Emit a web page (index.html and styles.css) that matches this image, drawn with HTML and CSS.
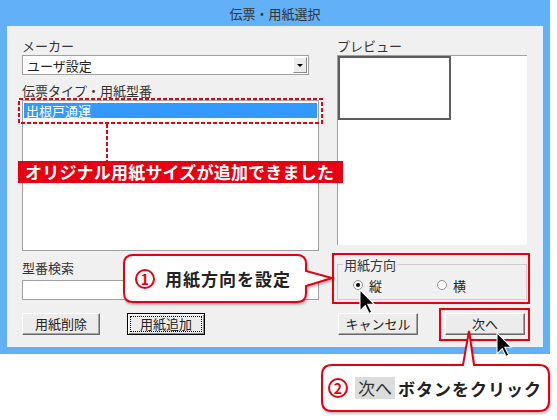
FILE: index.html
```html
<!DOCTYPE html>
<html lang="ja">
<head>
    <meta charset="UTF-8">
    <meta name="viewport" content="width=device-width, initial-scale=1.0">
    <title>伝票・用紙選択</title>
    <link rel="stylesheet" href="styles.css">
</head>
<body>
    <div class="window">
        <div class="titlebar">伝票・用紙選択</div>
        <div class="dialog">
            <div class="col-left">
                <div class="label">メーカー</div>
                <div class="combo">
                    <span class="combo-text">ユーザ設定</span>
                    <span class="combo-btn"><span class="arrow"></span></span>
                </div>
                <div class="label gap-8">伝票タイプ・用紙型番</div>
                <div class="listbox">
                    <div class="list-item selected">出根戸通運</div>
                </div>
                <div class="label gap-9">型番検索</div>
                <div class="textbox"></div>
                <div class="button-row">
                    <button type="button" class="btn">用紙削除</button>
                    <button type="button" class="btn focused">用紙追加</button>
                </div>
            </div>
            <div class="col-right">
                <div class="label">プレビュー</div>
                <div class="preview"><div class="paper"></div></div>
                <fieldset class="group">
                    <legend>用紙方向</legend>
                    <div class="radio-row">
                        <span class="radio-item first"><span class="radio checked"></span>縦</span>
                        <span class="radio-item"><span class="radio"></span>横</span>
                    </div>
                </fieldset>
                <div class="button-row right">
                    <button type="button" class="btn">キャンセル</button>
                    <button type="button" class="btn">次へ</button>
                </div>
            </div>
        </div>
    </div>

    <!-- 注釈（赤枠・吹き出し・カーソル） -->
    <svg class="marks" width="557" height="420" viewBox="0 0 557 420">
        <rect x="19" y="99" width="303" height="24" fill="none" stroke="#fff" stroke-width="2"/>
        <rect x="19" y="99" width="303" height="24" fill="none" stroke="#e60012" stroke-width="2" stroke-dasharray="4 2"/>
        <line x1="107" y1="124" x2="107" y2="161" stroke="#e60012" stroke-width="2" stroke-dasharray="4 2"/>
        <rect x="333" y="254" width="196" height="49" fill="none" stroke="#e60012" stroke-width="2"/>
        <rect x="440" y="309" width="89" height="31" fill="none" stroke="#e60012" stroke-width="2"/>
        <g class="bubble">
            <path d="M133,255 H297 Q306,255 306,264 V271 L332,278 L306,286 V293 Q306,302 297,302 H133 Q124,302 124,293 V264 Q124,255 133,255 Z" fill="#fff" stroke="#e60012" stroke-width="2"/>
            <path d="M332,365 H463 L469,331 L474,365 H539 Q549,365 549,375 V401 Q549,411 539,411 H332 Q322,411 322,401 V375 Q322,365 332,365 Z" fill="#fff" stroke="#e60012" stroke-width="2"/>
        </g>
        <path d="M0,0 V16 L4,12 L7,18 L9,17 L6,11 H11 Z" transform="translate(360 290) scale(1.3)" fill="#000" stroke="#fff" stroke-width="0.8"/>
        <path d="M0,0 V16 L4,12 L7,18 L9,17 L6,11 H11 Z" transform="translate(497 333) scale(1.3)" fill="#000" stroke="#fff" stroke-width="0.8"/>
    </svg>

    <div class="notice">オリジナル用紙サイズが追加できました</div>
    <div class="callout callout-1"><span class="num">1</span>用紙方向を設定</div>
    <div class="callout callout-2"><span class="num">2</span><span class="key">次へ</span>ボタンをクリック</div>
</body>
</html>
```

FILE: styles.css
```css
/* Reset */
* {
    margin: 0;
    padding: 0;
    box-sizing: border-box;
}
body {
    font-family: "Noto Sans CJK JP", "Noto Sans", sans-serif;
    background-color: #ffffff;
    color: #000;
    width: 557px;
    height: 420px;
    overflow: hidden;
}

/* ウィンドウ枠 */
.window {
    width: 550px;
    height: 354px;
    background-color: #62b0f8;
    padding: 0 7px 7px 7px;
}
.titlebar {
    height: 26px;
    display: flex;
    align-items: center;
    justify-content: center;
    font-size: 13px;
    color: #333;
}
.dialog {
    height: 321px;
    background-color: #f0f0f0;
    padding: 12px 16px 0 15px;
    display: flex;
    gap: 18px;
}
.col-left {
    width: 297px;
    display: flex;
    flex-direction: column;
}
.col-right {
    width: 190px;
    display: flex;
    flex-direction: column;
}
.label {
    font-size: 13px;
    line-height: 15px;
    height: 15px;
    color: #333;
    white-space: nowrap;
}
.gap-8 { margin-top: 8px; }
.gap-9 { margin-top: 9px; }

/* コンボボックス */
.combo {
    width: 287px;
    height: 20px;
    margin-top: 2px;
    background-color: #fff;
    border: 1px solid #a0a0a0;
    display: flex;
    align-items: center;
    justify-content: space-between;
    padding: 1px;
}
.combo-text {
    font-size: 13px;
    line-height: 15px;
    padding-left: 3px;
    color: #222;
}
.combo-btn {
    width: 14px;
    height: 16px;
    background-color: #ececec;
    border: 1px solid;
    border-color: #fff #8a8a8a #8a8a8a #fff;
    display: flex;
    align-items: center;
    justify-content: center;
}
.arrow {
    width: 0;
    height: 0;
    border-left: 3px solid transparent;
    border-right: 3px solid transparent;
    border-top: 3px solid #000;
}

/* リストボックス */
.listbox {
    height: 151px;
    margin-top: 2px;
    background-color: #fff;
    border: 1px solid #a0a0a0;
    padding: 2px 1px;
}
.list-item {
    height: 15px;
    font-size: 13px;
    line-height: 15px;
    padding-left: 2px;
}
.list-item.selected {
    background-color: #3399ff;
    color: #fff;
}
.textbox {
    height: 20px;
    margin-top: 5px;
    background-color: #fff;
    border: 1px solid #a0a0a0;
}

/* ボタン */
.button-row {
    display: flex;
    gap: 27px;
    margin-top: 13px;
}
.button-row.right {
    padding-left: 1px;
}
.btn {
    width: 78px;
    height: 22px;
    font-family: inherit;
    font-size: 13px;
    line-height: 18px;
    color: #222;
    background-color: #ececec;
    border: 1px solid;
    border-color: #fff #6a6a6a #6a6a6a #fff;
    box-shadow: inset -1px -1px #a0a0a0;
}
.btn.focused {
    border-color: #000;
    box-shadow: inset 1px 1px #fff, inset -1px -1px #8a8a8a;
    outline: 1px dotted #000;
    outline-offset: -4px;
}
.button-row.right .btn {
    width: 80px;
}

/* プレビュー */
.preview {
    height: 190px;
    margin-top: 2px;
    background-color: #fff;
    border-top: 1px solid #a0a0a0;
    border-left: 1px solid #a0a0a0;
}
.paper {
    width: 113px;
    height: 64px;
    border: 2px solid #5e5e5e;
}

/* 用紙方向 */
.group {
    margin-top: 12px;
    border: 1px solid #cdcdcd;
    padding: 0;
    height: 43px;
}
.group legend {
    font-size: 13px;
    line-height: 15px;
    margin-left: 5px;
    padding: 0 1px;
    color: #333;
}
.radio-row {
    display: flex;
    align-items: center;
    padding: 6px 0 0 15px;
    height: 20px;
}
.radio-item {
    display: flex;
    align-items: center;
    gap: 6px;
    font-size: 13px;
    line-height: 15px;
    color: #222;
}
.radio-item.first {
    width: 84px;
}
.radio {
    width: 10px;
    height: 10px;
    border-radius: 50%;
    border: 1px solid #8e8f8f;
    background-color: #fff;
    display: flex;
    align-items: center;
    justify-content: center;
}
.radio.checked::after {
    content: "";
    width: 4px;
    height: 4px;
    border-radius: 50%;
    background-color: #000;
}

/* 注釈 */
.marks {
    position: absolute;
    left: 0;
    top: 0;
    pointer-events: none;
}
.bubble {
    filter: drop-shadow(1px 2px 1px rgba(0, 0, 0, 0.25));
}
.notice {
    position: absolute;
    left: 18px;
    top: 161px;
    width: 325px;
    height: 22px;
    background-color: #e60012;
    color: #fff;
    font-weight: bold;
    font-size: 17px;
    line-height: 22px;
    padding-left: 7px;
    letter-spacing: 0.2px;
    white-space: nowrap;
}
.callout {
    position: absolute;
    display: flex;
    align-items: center;
    font-weight: bold;
    font-size: 17px;
    letter-spacing: 1px;
    color: #222;
    white-space: nowrap;
}
.callout-1 {
    left: 124px;
    top: 255px;
    width: 182px;
    height: 47px;
    padding-left: 11px;
}
.callout-2 {
    left: 322px;
    top: 365px;
    width: 227px;
    height: 46px;
    padding-left: 6px;
}
.num {
    width: 20px;
    height: 20px;
    border-radius: 50%;
    border: 2px solid #e60012;
    color: #e60012;
    font-size: 14px;
    line-height: 16px;
    letter-spacing: 0;
    text-align: center;
    margin-right: 10px;
}
.callout-2 .num {
    margin-right: 7px;
}
.key {
    background-color: #dcdcdc;
    font-weight: normal;
    color: #333;
    height: 22px;
    line-height: 22px;
    padding: 0 3px;
    margin-right: 3px;
    letter-spacing: 0;
}
```
